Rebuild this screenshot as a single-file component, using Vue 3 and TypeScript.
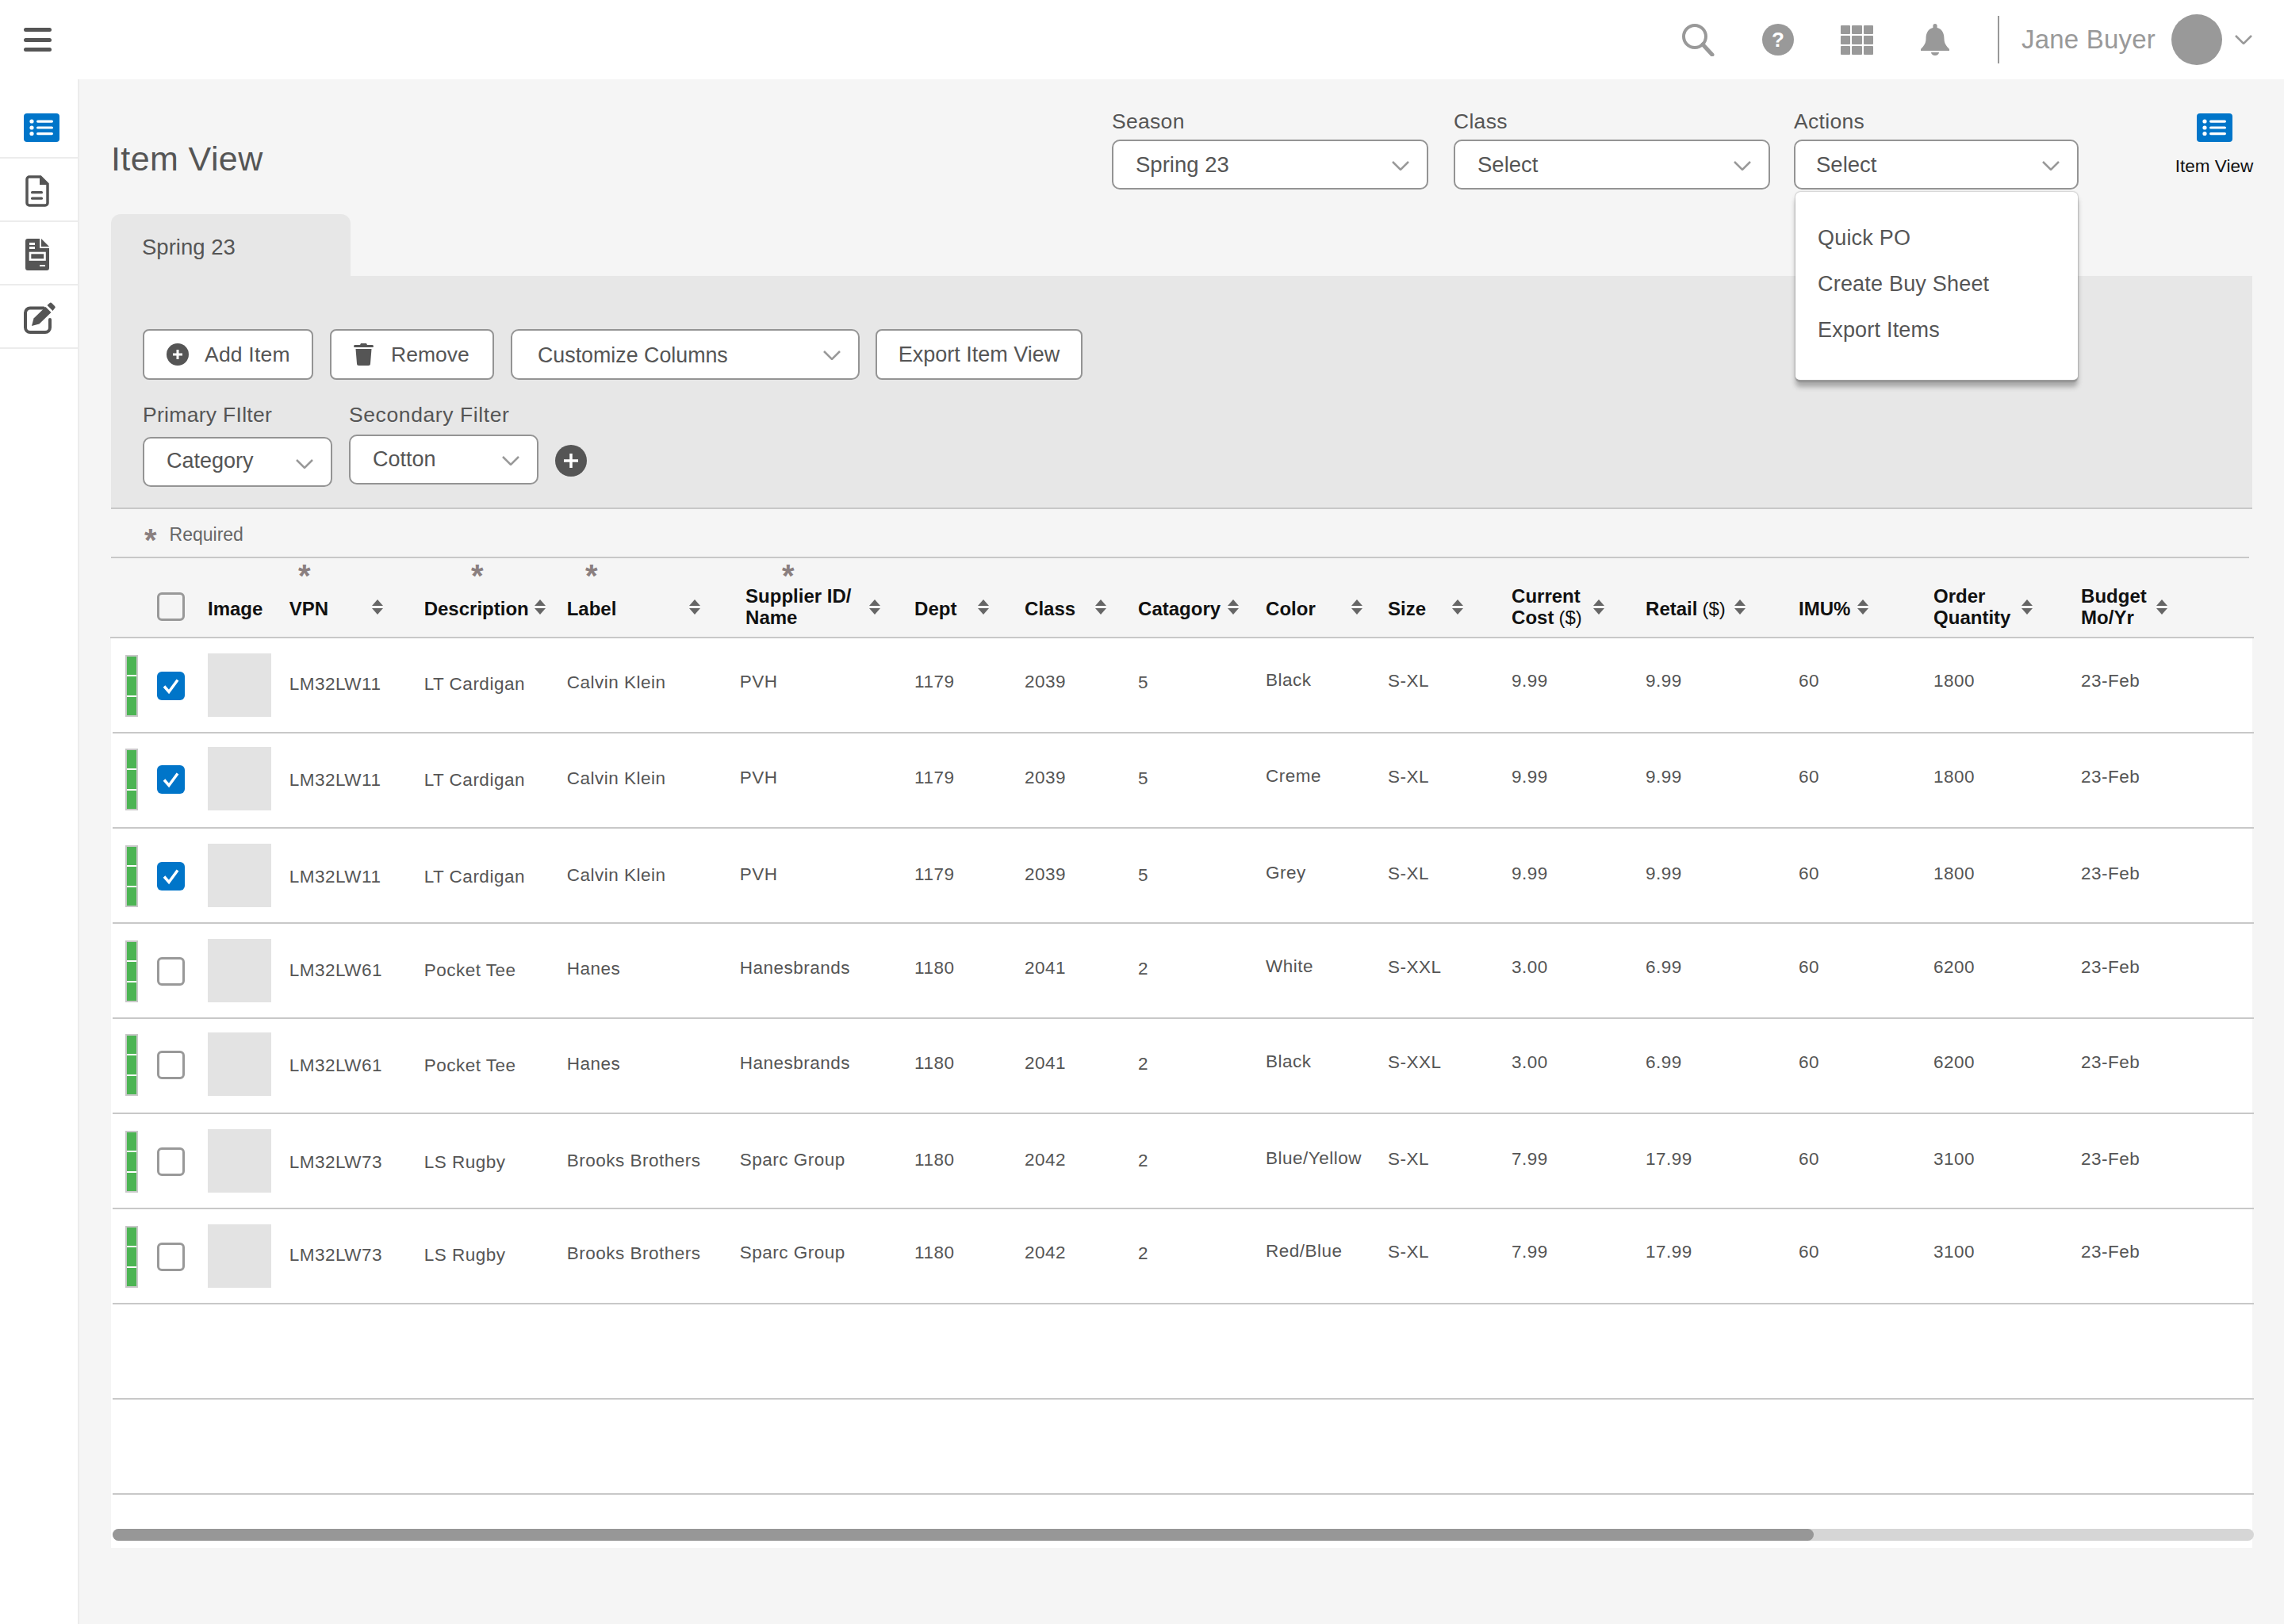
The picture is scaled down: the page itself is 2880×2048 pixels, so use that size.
<script setup lang="ts">
interface Column {
  key: string
  lines: string[]
  suffix?: string
  labelW: number
  lift: number
  star?: number
}

const columns: Column[] = [
  { key: 'vpn', lines: ['VPN'], labelW: 104, lift: 1, star: 19 },
  { key: 'desc', lines: ['Description'], labelW: 139, lift: 1, star: 67 },
  { key: 'label', lines: ['Label'], labelW: 154, lift: 3, star: 31 },
  { key: 'supplier', lines: ['Supplier ID/', 'Name'], labelW: 163, lift: 4, star: 61 },
  { key: 'dept', lines: ['Dept'], labelW: 80, lift: 4 },
  { key: 'cls', lines: ['Class'], labelW: 89, lift: 4 },
  { key: 'cat', lines: ['Catagory'], labelW: 112.6, lift: 3 },
  { key: 'color', lines: ['Color'], labelW: 107.5, lift: 6 },
  { key: 'size', lines: ['Size'], labelW: 81, lift: 5 },
  { key: 'cost', lines: ['Current', 'Cost'], suffix: '($)', labelW: 103, lift: 5 },
  { key: 'retail', lines: ['Retail'], suffix: '($)', labelW: 112, lift: 5 },
  { key: 'imu', lines: ['IMU%'], labelW: 73.6, lift: 5 },
  { key: 'qty', lines: ['Order', 'Quantity'], labelW: 110.5, lift: 5 },
  { key: 'budget', lines: ['Budget', 'Mo/Yr'], labelW: 94.6, lift: 5 },
]

type Row = Record<string, string> & { id: string }

const base = (o: Record<string, string>, id: string): Row => ({ id, imu: '60', budget: '23-Feb', ...o })

const rows: Row[] = [
  base({ vpn: 'LM32LW11', desc: 'LT Cardigan', label: 'Calvin Klein', supplier: 'PVH', dept: '1179', cls: '2039', cat: '5', color: 'Black', size: 'S-XL', cost: '9.99', retail: '9.99', qty: '1800' }, 'a'),
  base({ vpn: 'LM32LW11', desc: 'LT Cardigan', label: 'Calvin Klein', supplier: 'PVH', dept: '1179', cls: '2039', cat: '5', color: 'Creme', size: 'S-XL', cost: '9.99', retail: '9.99', qty: '1800' }, 'b'),
  base({ vpn: 'LM32LW11', desc: 'LT Cardigan', label: 'Calvin Klein', supplier: 'PVH', dept: '1179', cls: '2039', cat: '5', color: 'Grey', size: 'S-XL', cost: '9.99', retail: '9.99', qty: '1800' }, 'c'),
  base({ vpn: 'LM32LW61', desc: 'Pocket Tee', label: 'Hanes', supplier: 'Hanesbrands', dept: '1180', cls: '2041', cat: '2', color: 'White', size: 'S-XXL', cost: '3.00', retail: '6.99', qty: '6200' }, 'd'),
  base({ vpn: 'LM32LW61', desc: 'Pocket Tee', label: 'Hanes', supplier: 'Hanesbrands', dept: '1180', cls: '2041', cat: '2', color: 'Black', size: 'S-XXL', cost: '3.00', retail: '6.99', qty: '6200' }, 'e'),
  base({ vpn: 'LM32LW73', desc: 'LS Rugby', label: 'Brooks Brothers', supplier: 'Sparc Group', dept: '1180', cls: '2042', cat: '2', color: 'Blue/Yellow', size: 'S-XL', cost: '7.99', retail: '17.99', qty: '3100' }, 'f'),
  base({ vpn: 'LM32LW73', desc: 'LS Rugby', label: 'Brooks Brothers', supplier: 'Sparc Group', dept: '1180', cls: '2042', cat: '2', color: 'Red/Blue', size: 'S-XL', cost: '7.99', retail: '17.99', qty: '3100' }, 'g'),
]

// the rows don't sit evenly in the mock, each has its own top offset
const rowTop = [19, 17, 19, 19, 17, 19, 19]
const textDrop = [0, 3, 2.5, 1, 3, 3, 0]
const checked = [true, true, true, false, false, false, false]

const fields = [
  { label: 'Season', value: 'Spring 23', cls: 'f-season' },
  { label: 'Class', value: 'Select', cls: 'f-class' },
  { label: 'Actions', value: 'Select', cls: 'f-actions' },
]
const menu = ['Quick PO', 'Create Buy Sheet', 'Export Items']
const grid = [0, 1, 2, 3, 4, 5, 6, 7, 8]
</script>

<template>
  <div class="page">
    <header class="topbar">
      <div class="burger"><i></i><i></i><i></i></div>
      <div class="top-right">
        <svg class="ic-search" width="42" height="42" viewBox="0 0 42 42">
          <circle cx="17" cy="17" r="14" fill="none" stroke="#999" stroke-width="4" />
          <path d="M27 27 L39 40" stroke="#999" stroke-width="5" stroke-linecap="round" />
        </svg>
        <svg class="ic-help" width="40" height="40" viewBox="0 0 40 40">
          <circle cx="20" cy="20" r="20" fill="#999" />
          <text x="20" y="29" text-anchor="middle" font-size="26" font-weight="700" fill="#fff" font-family="Liberation Sans, sans-serif">?</text>
        </svg>
        <div class="ic-grid"><i v-for="n in grid" :key="n"></i></div>
        <svg class="ic-bell" width="38" height="40" viewBox="0 0 38 40">
          <path fill="#999" d="M19 0a2.6 2.6 0 0 1 2.6 2.6V5C28 6.5 30.500 12 30.500 19c0 6 3 9 6.500 13v2H1v-2c3.500-4 6.500-7 6.500-13C7.500 12 10 6.500 16.400 5V2.600A2.600 2.600 0 0 1 19 0z" />
          <path fill="#999" d="M14 36h10a5 4 0 0 1-10 0z" />
        </svg>
        <div class="top-div"></div>
        <span class="user">Jane Buyer</span>
        <div class="avatar"></div>
        <svg class="top-chev" width="22" height="12" viewBox="0 0 22 12">
          <path d="M1 1 L11 11 L21 1" fill="none" stroke="#999" stroke-width="2.500" />
        </svg>
      </div>
    </header>

    <div class="body">
      <aside class="sidebar">
        <div class="side-item">
          <svg width="45" height="36" viewBox="0 0 45 36">
            <rect width="45" height="36" rx="4" fill="#0075c9" />
            <g fill="#fff">
              <circle cx="10" cy="10" r="2.600" /><circle cx="10" cy="18" r="2.600" /><circle cx="10" cy="25.500" r="2.600" />
              <rect x="16" y="8.500" width="21" height="3.200" rx="1.600" />
              <rect x="16" y="16.400" width="21" height="3.200" rx="1.600" />
              <rect x="16" y="24" width="21" height="3.200" rx="1.600" />
            </g>
          </svg>
        </div>
        <div class="side-item">
          <svg class="ic-doc" width="30" height="40" viewBox="0 0 30 40">
            <path d="M5 2H19L28 11V35a3 3 0 0 1-3 3H5a3 3 0 0 1-3-3V5a3 3 0 0 1 3-3z" fill="none" stroke="#555" stroke-width="3.500" />
            <path d="M18 1.500V12H29z" fill="#555" />
            <rect x="7" y="20" width="15" height="3.200" rx="1.500" fill="#555" />
            <rect x="7" y="27.500" width="15" height="3.200" rx="1.500" fill="#555" />
          </svg>
        </div>
        <div class="side-item">
          <svg class="ic-doc" width="30" height="40" viewBox="0 0 30 40">
            <path d="M3 0H18V12H30V37a3 3 0 0 1-3 3H3a3 3 0 0 1-3-3V3a3 3 0 0 1 3-3z" fill="#555" />
            <path d="M20 0L30 10H20z" fill="#555" />
            <g fill="#fff">
              <rect x="5" y="5" width="7" height="3" />
              <rect x="5" y="10" width="7" height="3" />
              <rect x="18" y="33" width="7" height="2" />
            </g>
            <rect x="6" y="18" width="18.500" height="8.500" fill="none" stroke="#fff" stroke-width="2.600" />
          </svg>
        </div>
        <div class="side-item">
          <svg width="40" height="40" viewBox="0 0 40 40">
            <path d="M25 7.500H8a6 6 0 0 0-6 6V32a6 6 0 0 0 6 6h19a6 6 0 0 0 6-6V22" fill="none" stroke="#555" stroke-width="4" stroke-linecap="round" />
            <path d="M10 30L12.500 20.500L27.500 6L34.500 13L19.500 27.500z" fill="#555" />
            <path d="M29.500 4L32.500 1.300a2 2 0 0 1 2.800 0L39 5a2 2 0 0 1 0 2.800L36.500 11z" fill="#555" />
          </svg>
        </div>
      </aside>

      <main class="main">
        <div class="main-head">
          <h1 class="title">Item View</h1>
          <div v-for="f in fields" :key="f.label" class="field" :class="f.cls">
            <label class="lbl">{{ f.label }}</label>
            <div class="select top-select">
              <span>{{ f.value }}</span>
              <svg width="22" height="12" viewBox="0 0 22 12"><path d="M1 1 L11 11 L21 1" fill="none" stroke="#999" stroke-width="2.500" /></svg>
            </div>
            <div v-if="f.label === 'Actions'" class="menu">
              <div v-for="m in menu" :key="m" class="menu-item">{{ m }}</div>
            </div>
          </div>
          <div class="view-switch">
            <svg width="45" height="36" viewBox="0 0 45 36">
              <rect width="45" height="36" rx="4" fill="#0075c9" />
              <g fill="#fff">
                <circle cx="10" cy="10" r="2.600" /><circle cx="10" cy="18" r="2.600" /><circle cx="10" cy="25.500" r="2.600" />
                <rect x="16" y="8.500" width="21" height="3.200" rx="1.600" />
                <rect x="16" y="16.400" width="21" height="3.200" rx="1.600" />
                <rect x="16" y="24" width="21" height="3.200" rx="1.600" />
              </g>
            </svg>
            <span>Item View</span>
          </div>
        </div>

        <div class="tab">Spring 23</div>

        <section class="panel">
          <div class="toolbar">
            <button class="btn btn-add">
              <svg width="28" height="28" viewBox="0 0 28 28">
                <circle cx="14" cy="14" r="14" fill="#555" />
                <path d="M14 8v12M8 14h12" stroke="#fff" stroke-width="3" />
              </svg>
              Add Item
            </button>
            <button class="btn btn-remove">
              <svg width="25" height="28" viewBox="0 0 25 28">
                <path fill="#555" d="M9 0h7l1 2h6.500a1.300 1.300 0 0 1 0 3H1.500a1.300 1.300 0 0 1 0-3H8z" />
                <path fill="#555" d="M2.500 7h20L21 25.500a2.500 2.500 0 0 1-2.500 2.500h-12A2.500 2.500 0 0 1 4 25.500z" />
              </svg>
              Remove
            </button>
            <div class="select customize">
              <span>Customize Columns</span>
              <svg width="22" height="12" viewBox="0 0 22 12"><path d="M1 1 L11 11 L21 1" fill="none" stroke="#999" stroke-width="2.500" /></svg>
            </div>
            <button class="btn btn-export">Export Item View</button>
          </div>
          <div class="filters">
            <div class="filter">
              <label class="lbl">Primary FIlter</label>
              <div class="select filter-select low">
                <span>Category</span>
                <svg class="drop" width="22" height="12" viewBox="0 0 22 12"><path d="M1 1 L11 11 L21 1" fill="none" stroke="#999" stroke-width="2.500" /></svg>
              </div>
            </div>
            <div class="filter">
              <label class="lbl">Secondary Filter</label>
              <div class="select filter-select">
                <span>Cotton</span>
                <svg width="22" height="12" viewBox="0 0 22 12"><path d="M1 1 L11 11 L21 1" fill="none" stroke="#999" stroke-width="2.500" /></svg>
              </div>
            </div>
            <svg class="add-filter" width="40" height="40" viewBox="0 0 40 40">
              <circle cx="20" cy="20" r="20" fill="#555" />
              <path d="M20 11v18M11 20h18" stroke="#fff" stroke-width="3.500" />
            </svg>
          </div>
        </section>

        <div class="required"><span class="star">*</span><span class="req-text">Required</span></div>

        <div class="thead tgrid">
          <div></div>
          <div class="cell-check"><span class="box"></span></div>
          <div class="hcell"><div class="hlabel">Image</div></div>
          <div v-for="c in columns" :key="c.key" class="hcell" :class="'h-' + c.key">
            <span v-if="c.star" class="star star-abs" :style="{ left: c.star + 'px' }">*</span>
            <div class="hlabel" :class="{ two: c.lines.length > 1 }" :style="{ width: c.labelW + 'px' }">
              <div v-for="(l, i) in c.lines" :key="l">
                {{ l }}<span v-if="c.suffix && i === c.lines.length - 1" class="light">{{ c.suffix }}</span>
              </div>
            </div>
            <svg class="sort" width="14" height="19" viewBox="0 0 14 19">
              <path d="M7 0L14 8H0z" fill="#666" />
              <path d="M0 11H14L7 19z" fill="#666" />
            </svg>
          </div>
        </div>

        <div class="tbody">
          <div
            v-for="(r, i) in rows"
            :key="r.id"
            class="trow tgrid"
            :style="{ paddingTop: rowTop[i] + 'px' }"
          >
            <div class="status"><i></i><i></i><i></i></div>
            <div class="cell-check-row">
              <span class="box" :class="{ on: checked[i] }">
                <svg v-if="checked[i]" width="35" height="36" viewBox="0 0 35 36">
                  <path d="M9 18.500L15 25.500L26 10.500" fill="none" stroke="#fff" stroke-width="3.500" />
                </svg>
              </span>
            </div>
            <div class="thumb"></div>
            <div
              v-for="c in columns"
              :key="c.key"
              class="cell"
              :style="{ paddingBottom: c.lift * 2 + 'px', paddingTop: textDrop[i] * 2 + 'px' }"
            >
              {{ r[c.key] }}
            </div>
          </div>
          <div class="trow empty"></div>
          <div class="trow empty"></div>
          <div class="scrollbar"><div class="thumbbar"></div></div>
        </div>
      </main>
    </div>
  </div>
</template>

<style>
html,
body {
  margin: 0;
  background: #f5f5f5;
}
</style>

<style scoped>
.page {
  width: 2880px;
  height: 2048px;
  overflow: hidden;
  font-family: 'Liberation Sans', Arial, sans-serif;
  color: #555;
}

/* top bar */
.topbar {
  height: 100px;
  background: #fff;
  display: flex;
  align-items: center;
  padding-left: 30px;
  box-sizing: border-box;
}
.burger {
  width: 35px;
  display: flex;
  flex-direction: column;
  gap: 7.500px;
}
.burger i {
  display: block;
  height: 5px;
  border-radius: 3px;
  background: #555;
}
.top-right {
  margin-left: auto;
  display: flex;
  align-items: center;
  padding-right: 40px;
}
.ic-search {
  margin-right: 60px;
}
.ic-help {
  margin-right: 59px;
}
.ic-grid {
  width: 41px;
  display: grid;
  grid-template-columns: repeat(3, 1fr);
  gap: 2px;
  margin-right: 59px;
}
.ic-grid i {
  display: block;
  height: 11px;
  background: #999;
  border-radius: 1px;
}
.top-div {
  width: 2px;
  height: 60px;
  background: #999;
  margin-left: 60px;
}
.user {
  font-size: 33px;
  letter-spacing: 0.2px;
  color: #999;
  margin-left: 28px;
  width: 189px;
  white-space: nowrap;
}
.avatar {
  width: 64px;
  height: 64px;
  border-radius: 50%;
  background: #999;
}
.top-chev {
  margin-left: 16px;
}

.body {
  display: flex;
  height: 1948px;
}

/* sidebar */
.sidebar {
  width: 100px;
  flex: none;
  box-sizing: border-box;
  background: #fff;
  border-right: 2px solid #ececec;
  padding-top: 20px;
}
.side-item {
  height: 80px;
  box-sizing: border-box;
  border-bottom: 2px solid #ececec;
  display: flex;
  align-items: center;
  padding: 4px 0 0 30px;
}
.ic-doc {
  margin-left: 2px;
}

/* main */
.main {
  flex: 1;
  background: #f5f5f5;
  padding-left: 40px;
  min-width: 0;
}
.main-head {
  height: 170px;
  display: flex;
  align-items: flex-start;
  padding-top: 38px;
  box-sizing: border-box;
}
.title {
  flex: 0 0 1262px;
  margin: 37px 0 0;
  font-size: 43px;
  letter-spacing: 0.4px;
  line-height: 50px;
  font-weight: 400;
  color: #555;
}
.field {
  position: relative;
  display: flex;
  flex-direction: column;
  gap: 8px;
}
.f-season {
  width: 399px;
  margin-right: 32px;
}
.f-class {
  width: 399px;
  margin-right: 30px;
}
.f-actions {
  width: 359px;
}
.lbl {
  display: block;
  font-size: 26.500px;
  letter-spacing: 0.3px;
  line-height: 30px;
  color: #555;
  white-space: nowrap;
}
.select {
  box-sizing: border-box;
  height: 63px;
  background: #fff;
  border: 2px solid #949494;
  border-radius: 10px;
  display: flex;
  align-items: center;
  justify-content: space-between;
  padding: 0 22px 0 28px;
  font-size: 27.500px;
  color: #555;
  white-space: nowrap;
}
.select svg {
  margin-top: 2px;
}
.f-actions .select {
  padding-left: 26px;
}
.menu {
  position: absolute;
  z-index: 5;
  top: 104px;
  left: 2px;
  width: 356px;
  height: 239px;
  box-sizing: border-box;
  padding: 29px 0 0 28px;
  background: #fff;
  border-radius: 6px;
  border-bottom: 2px solid #999;
  box-shadow:
    0 0 2px rgba(0, 0, 0, 0.45),
    0 7px 6px rgba(0, 0, 0, 0.28);
}
.menu-item {
  font-size: 27px;
  letter-spacing: 0.2px;
  line-height: 58px;
  color: #555;
}
.view-switch {
  margin: 5px 0 0 121px;
  width: 100px;
  display: flex;
  flex-direction: column;
  align-items: center;
  gap: 18px;
  font-size: 22.500px;
  line-height: 26px;
  color: #111;
  white-space: nowrap;
}

/* tab + panel */
.tab {
  width: 302px;
  height: 78px;
  box-sizing: border-box;
  padding: 26px 0 0 39px;
  background: #e7e7e7;
  border-radius: 12px 12px 0 0;
  font-size: 27.500px;
  line-height: 32px;
  color: #555;
}
.panel {
  width: 2700px;
  height: 294px;
  box-sizing: border-box;
  background: #e7e7e7;
  border-bottom: 2px solid #c8c8c8;
  padding: 67px 0 0 40px;
}
.toolbar {
  display: flex;
  height: 64px;
}
.btn {
  box-sizing: border-box;
  height: 64px;
  background: #fff;
  border: 2px solid #949494;
  border-radius: 8px;
  display: flex;
  align-items: center;
  font-family: inherit;
  font-size: 26.500px;
  letter-spacing: 0.2px;
  color: #555;
  padding: 0;
  white-space: nowrap;
}
.btn-add {
  width: 215px;
  padding-left: 28px;
  gap: 20px;
}
.btn-remove {
  width: 207px;
  margin-left: 21px;
  padding-left: 28px;
  gap: 22px;
  letter-spacing: 0;
}
.customize {
  width: 440px;
  height: 64px;
  margin-left: 21px;
  padding: 0 22px 0 32px;
  font-size: 26.800px;
}
.customize span {
  margin-top: 3px;
}
.btn-export {
  width: 261px;
  margin-left: 20px;
  justify-content: center;
  font-size: 27px;
  letter-spacing: 0;
}
.filters {
  display: flex;
  align-items: flex-start;
  margin-top: 29px;
}
.filter {
  width: 239px;
  margin-right: 21px;
  display: flex;
  flex-direction: column;
  gap: 10px;
}
.filter:nth-child(2) .lbl {
  letter-spacing: 0.6px;
}
.filter-select {
  padding: 0 22px 0 28px;
  font-size: 27px;
}
.filter-select.low {
  margin-top: 3px;
}
.filter-select.low span {
  margin-top: -3px;
}
.filter-select .drop {
  margin-top: 5px;
}
.add-filter {
  margin-top: 53px;
}

/* required */
.required {
  width: 2696px;
  height: 62px;
  box-sizing: border-box;
  border-bottom: 2px solid #c8c8c8;
  display: flex;
  align-items: center;
  gap: 16px;
  padding-left: 42px;
  font-size: 23px;
  color: #666;
}
.req-text {
  margin-top: 5px;
}
.star {
  font-size: 40px;
  font-weight: 700;
  line-height: 40px;
  height: 40px;
  color: #8a7f7f;
}
.required .star {
  margin-top: 17px;
}
.star-abs {
  position: absolute;
  top: 2px;
  transform: translateX(-50%);
}

/* table */
.tgrid {
  display: grid;
  grid-template-columns: 40px 64px 102.700px 170px 180px 218px 220.400px 139px 143px 161px 154px 156px 169px 193px 170px 186px 1fr;
}
.thead {
  width: 2703px;
  height: 101px;
  margin-left: -1px;
  box-sizing: border-box;
  padding-left: 19px;
  border-bottom: 2px solid #c8c8c8;
  background: #f5f5f5;
}
.cell-check {
  display: flex;
  align-items: center;
  padding-top: 23px;
}
.cell-check-row {
  padding-top: 23px;
}
.box {
  display: block;
  width: 35px;
  height: 36px;
  box-sizing: border-box;
  border: 3px solid #999;
  border-radius: 6px;
  background: #fff;
}
.thead .box {
  background: #f5f5f5;
}
.box.on {
  border: 0;
  background: #0075c9;
}
.box svg {
  display: block;
}
.hcell {
  position: relative;
  display: flex;
  align-items: center;
  padding-top: 23px;
}
.hlabel {
  padding-top: 5px;
  font-size: 24px;
  font-weight: 700;
  line-height: 27px;
  color: #111;
  white-space: nowrap;
}
.hlabel.two {
  padding-top: 0;
}
.light {
  font-weight: 400;
  margin-left: 6px;
}
.h-supplier .hlabel {
  padding-left: 7.400px;
  box-sizing: border-box;
}
.sort {
  flex: none;
}
.tbody {
  width: 2700px;
  height: 1147px;
  background: #fff;
}
.trow {
  width: 2700px;
  height: 120px;
  margin-left: 2px;
  box-sizing: border-box;
  padding-left: 16px;
  border-bottom: 2px solid #c8c8c8;
  align-items: start;
}
.status {
  width: 16px;
  height: 78px;
  margin-top: 2px;
  box-sizing: border-box;
  padding: 2px;
  background: #c8c8c8;
  display: flex;
  flex-direction: column;
}
.status i {
  display: block;
  flex: 1;
  background: #4cb453;
}
.status i + i {
  border-top: 2px solid #fff;
}
.thumb {
  width: 80px;
  height: 80px;
  background: #e3e3e3;
}
.cell {
  height: 80px;
  box-sizing: border-box;
  display: flex;
  align-items: center;
  font-size: 22.500px;
  letter-spacing: 0.5px;
  color: #555;
  white-space: nowrap;
}
.scrollbar {
  width: 2700px;
  height: 15px;
  margin: 43px 0 0 2px;
  background: #d6d6d6;
  border-radius: 8px;
}
.thumbbar {
  width: 2145px;
  height: 15px;
  background: #979797;
  border-radius: 8px;
}
</style>
